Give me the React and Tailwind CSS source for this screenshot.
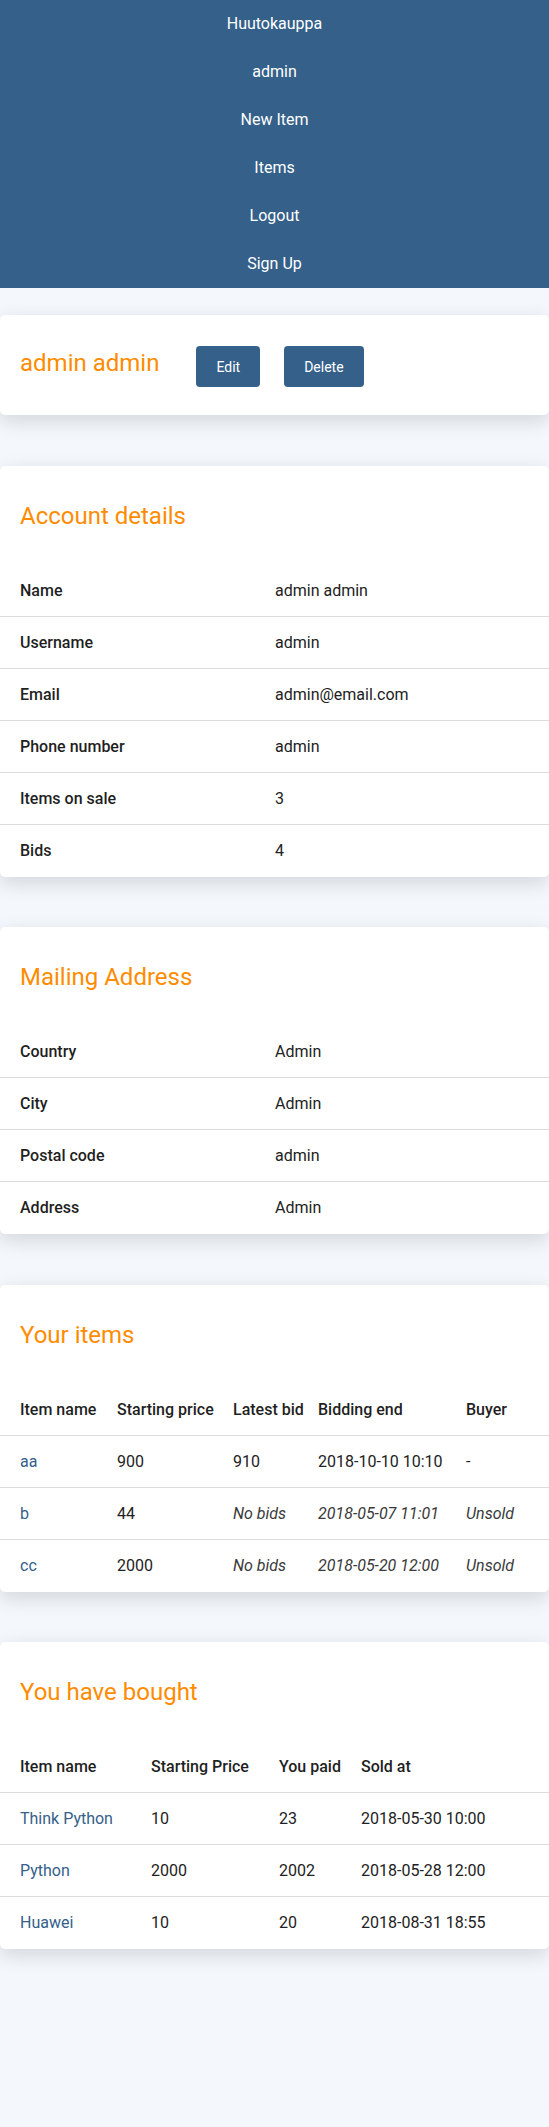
const navLinks = ['Huutokauppa', 'admin', 'New Item', 'Items', 'Logout', 'Sign Up'];

const account = [
  ['Name', 'admin admin'],
  ['Username', 'admin'],
  ['Email', 'admin@email.com'],
  ['Phone number', 'admin'],
  ['Items on sale', '3'],
  ['Bids', '4'],
];

const address = [
  ['Country', 'Admin'],
  ['City', 'Admin'],
  ['Postal code', 'admin'],
  ['Address', 'Admin'],
];

const yourItems = [
  { name: 'aa', start: '900', bid: '910', end: '2018-10-10 10:10', buyer: '-', sold: true },
  { name: 'b', start: '44', bid: 'No bids', end: '2018-05-07 11:01', buyer: 'Unsold', sold: false },
  { name: 'cc', start: '2000', bid: 'No bids', end: '2018-05-20 12:00', buyer: 'Unsold', sold: false },
];

const bought = [
  ['Think Python', '10', '23', '2018-05-30 10:00'],
  ['Python', '2000', '2002', '2018-05-28 12:00'],
  ['Huawei', '10', '20', '2018-08-31 18:55'],
];

function Card({ title, className = '', children }) {
  return (
    <div className={`bg-white rounded-[5px] shadow-[0_6px_20px_rgba(0,0,0,0.14)] ${className}`}>
      <div className="h-[99px] flex items-center px-5">
        <h2 className="text-[24px] leading-7 text-[#ff8c00]">{title}</h2>
      </div>
      {children}
    </div>
  );
}

function Row({ cols, cells, last, header }) {
  return (
    <div className={`flex h-[52px] items-center ${last ? '' : 'border-b border-[#dcdcdc]'}`}>
      {cells.map((c, i) => (
        <div key={i} style={{ width: cols[i] }} className={`${i === 0 ? 'pl-5' : ''} shrink-0 whitespace-nowrap ${header ? 'font-medium text-[#1f1f1f]' : ''}`}>
          {c}
        </div>
      ))}
    </div>
  );
}

export default function App() {
  const kvCols = [275, 274];
  const itemCols = [117, 116, 85, 148, 83];
  const boughtCols = [151, 128, 82, 188];

  return (
    <div className="min-h-screen bg-[#f4f8fc] text-[16px] text-[#222] font-['Roboto',sans-serif]">
      <nav className="bg-[#34608a]">
        {navLinks.map(l => (
          <div key={l} className="h-12 flex items-center justify-center text-white">{l}</div>
        ))}
      </nav>

      <div className="flex flex-col pt-[27px] pb-10">
        {/* profile header */}
        <div className="bg-white rounded-[5px] shadow-[0_6px_20px_rgba(0,0,0,0.14)] h-[100px] flex items-center px-5">
          <h1 className="text-[24px] leading-7 text-[#ff8c00] mr-[37px] -mt-1">admin admin</h1>
          <div className="flex gap-6 mt-[3px]">
            <button className="h-[41px] px-5 rounded-[4px] bg-[#34608a] text-white text-sm">Edit</button>
            <button className="h-[41px] px-5 rounded-[4px] bg-[#34608a] text-white text-sm">Delete</button>
          </div>
        </div>

        <Card title="Account details" className="mt-[51px]">
          {account.map(([k, v], i) => (
            <div key={k} className={`flex h-[52px] items-center ${i === account.length - 1 ? '' : 'border-b border-[#dcdcdc]'}`}>
              <div style={{ width: kvCols[0] }} className="pl-5 font-medium text-[#1f1f1f]">{k}</div>
              <div>{v}</div>
            </div>
          ))}
        </Card>

        <Card title="Mailing Address" className="mt-[50px]">
          {address.map(([k, v], i) => (
            <div key={k} className={`flex h-[52px] items-center ${i === address.length - 1 ? '' : 'border-b border-[#dcdcdc]'}`}>
              <div style={{ width: kvCols[0] }} className="pl-5 font-medium text-[#1f1f1f]">{k}</div>
              <div>{v}</div>
            </div>
          ))}
        </Card>

        <Card title="Your items" className="mt-[51px]">
          <Row header cols={itemCols} cells={['Item name', 'Starting price', 'Latest bid', 'Bidding end', 'Buyer']} />
          {yourItems.map((it, i) => (
            <Row key={it.name} cols={itemCols} last={i === yourItems.length - 1} cells={[
              <a className="text-[#34608a]">{it.name}</a>,
              it.start,
              it.sold ? it.bid : <i className="text-[#3a3a3a]">{it.bid}</i>,
              it.sold ? it.end : <i className="text-[#3a3a3a]">{it.end}</i>,
              it.sold ? it.buyer : <i className="text-[#3a3a3a]">{it.buyer}</i>,
            ]} />
          ))}
        </Card>

        <Card title="You have bought" className="mt-[50px]">
          <Row header cols={boughtCols} cells={['Item name', 'Starting Price', 'You paid', 'Sold at']} />
          {bought.map((b, i) => (
            <Row key={b[0]} cols={boughtCols} last={i === bought.length - 1} cells={[
              <a className="text-[#34608a]">{b[0]}</a>, b[1], b[2], b[3],
            ]} />
          ))}
        </Card>
      </div>
    </div>
  );
}
